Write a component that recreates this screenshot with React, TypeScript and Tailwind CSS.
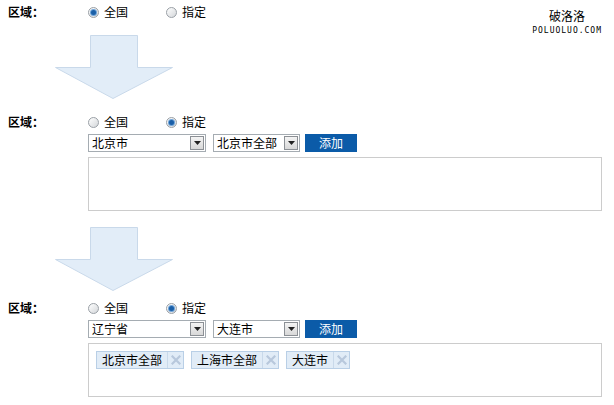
import React from 'react';

const font = { fontFamily: '"Noto Sans CJK SC", "Liberation Sans", sans-serif' };

function Radio({ checked, label }: { checked?: boolean; label: string }) {
  return (
    <span className="flex items-center gap-[5px] text-[12px] text-black">
      <span className="w-[11px] h-[11px] rounded-full border border-[#9aa0a6] bg-gradient-to-br from-white to-[#d4d7da] flex items-center justify-center">
        {checked && <span className="w-[5px] h-[5px] rounded-full bg-[#1a5fa8] ring-1 ring-[#6ea3d8]" />}
      </span>
      <span>{label}</span>
    </span>
  );
}

function Select({ value, width }: { value: string; width: string }) {
  return (
    <div className={`h-[18px] ${width} border border-[#a5acb2] bg-white flex items-center justify-between pl-[3px] pr-[1px]`}>
      <span className="text-[12px] leading-none text-black">{value}</span>
      <span className="w-[14px] h-[14px] border border-[#8c9095] bg-gradient-to-b from-[#f4f4f4] to-[#d8d8d8] flex items-center justify-center">
        <svg width="7" height="4" viewBox="0 0 7 4"><path d="M0 0h7L3.5 4z" fill="#222" /></svg>
      </span>
    </div>
  );
}

function Tag({ text }: { text: string }) {
  return (
    <span className="h-[18px] flex items-center border border-[#b9cfe6] bg-[#e1ecf7] text-[12px] text-black">
      <span className="px-[5px] leading-none">{text}</span>
      <span className="h-full w-[16px] border-l border-[#c9d9ea] flex items-center justify-center">
        <svg width="10" height="10" viewBox="0 0 10 10">
          <path d="M1.5 1.5l7 7M8.5 1.5l-7 7" stroke="#b8c8dc" strokeWidth="2.2" strokeLinecap="square" />
        </svg>
      </span>
    </span>
  );
}

function Arrow({ className }: { className: string }) {
  return (
    <svg width="120" height="64" viewBox="0 0 120 64" className={`block ${className}`}>
      <path d="M35.5 0.5h47v32h35L58 63.5 0.5 32.5h35z" fill="#e2edf8" stroke="#c9d9ea" strokeWidth="1" />
    </svg>
  );
}

function Label() {
  return <span className="w-[80px] text-[12px] font-bold text-black">区域：</span>;
}

function Picker({ prov, city, tags }: { prov: string; city: string; tags?: string[] }) {
  return (
    <div className="flex flex-col">
      <div className="flex items-center h-[18px]">
        <Label />
        <div className="flex items-center gap-[38px]">
          <Radio label="全国" />
          <Radio checked label="指定" />
        </div>
      </div>
      <div className="ml-[80px] mt-[3px] flex items-center">
        <Select value={prov} width="w-[118px]" />
        <div className="ml-[7px]">
          <Select value={city} width="w-[87px]" />
        </div>
        <button className="ml-[5px] h-[18px] w-[52px] bg-[#0b5ba8] text-white text-[12px] leading-none">添加</button>
      </div>
      <div className="ml-[80px] mt-[5px] w-[514px] h-[54px] border border-[#cccccc] bg-white flex items-start gap-[7px] px-[7px] pt-[7px]">
        {tags?.map((t) => <Tag key={t} text={t} />)}
      </div>
    </div>
  );
}

export default function App() {
  return (
    <div className="relative w-[614px] h-[405px] bg-white pl-[8px] pt-[3px]" style={font}>
      <div className="absolute right-[12px] top-[10px] flex flex-col items-center">
        <span className="text-[12px] leading-none text-black">破洛洛</span>
        <span className="mt-[5px] text-[8px] leading-none tracking-[1px] text-black" style={{ fontFamily: '"DejaVu Sans Mono", monospace' }}>POLUOLUO.COM</span>
      </div>

      <div className="flex items-center h-[18px]">
        <Label />
        <div className="flex items-center gap-[38px]">
          <Radio checked label="全国" />
          <Radio label="指定" />
        </div>
      </div>
      <Arrow className="ml-[47px] mt-[14px]" />

      <div className="mt-[14px]">
        <Picker prov="北京市" city="北京市全部" />
      </div>
      <Arrow className="ml-[47px] mt-[16px]" />

      <div className="mt-[8px]">
        <Picker prov="辽宁省" city="大连市" tags={['北京市全部', '上海市全部', '大连市']} />
      </div>
    </div>
  );
}
